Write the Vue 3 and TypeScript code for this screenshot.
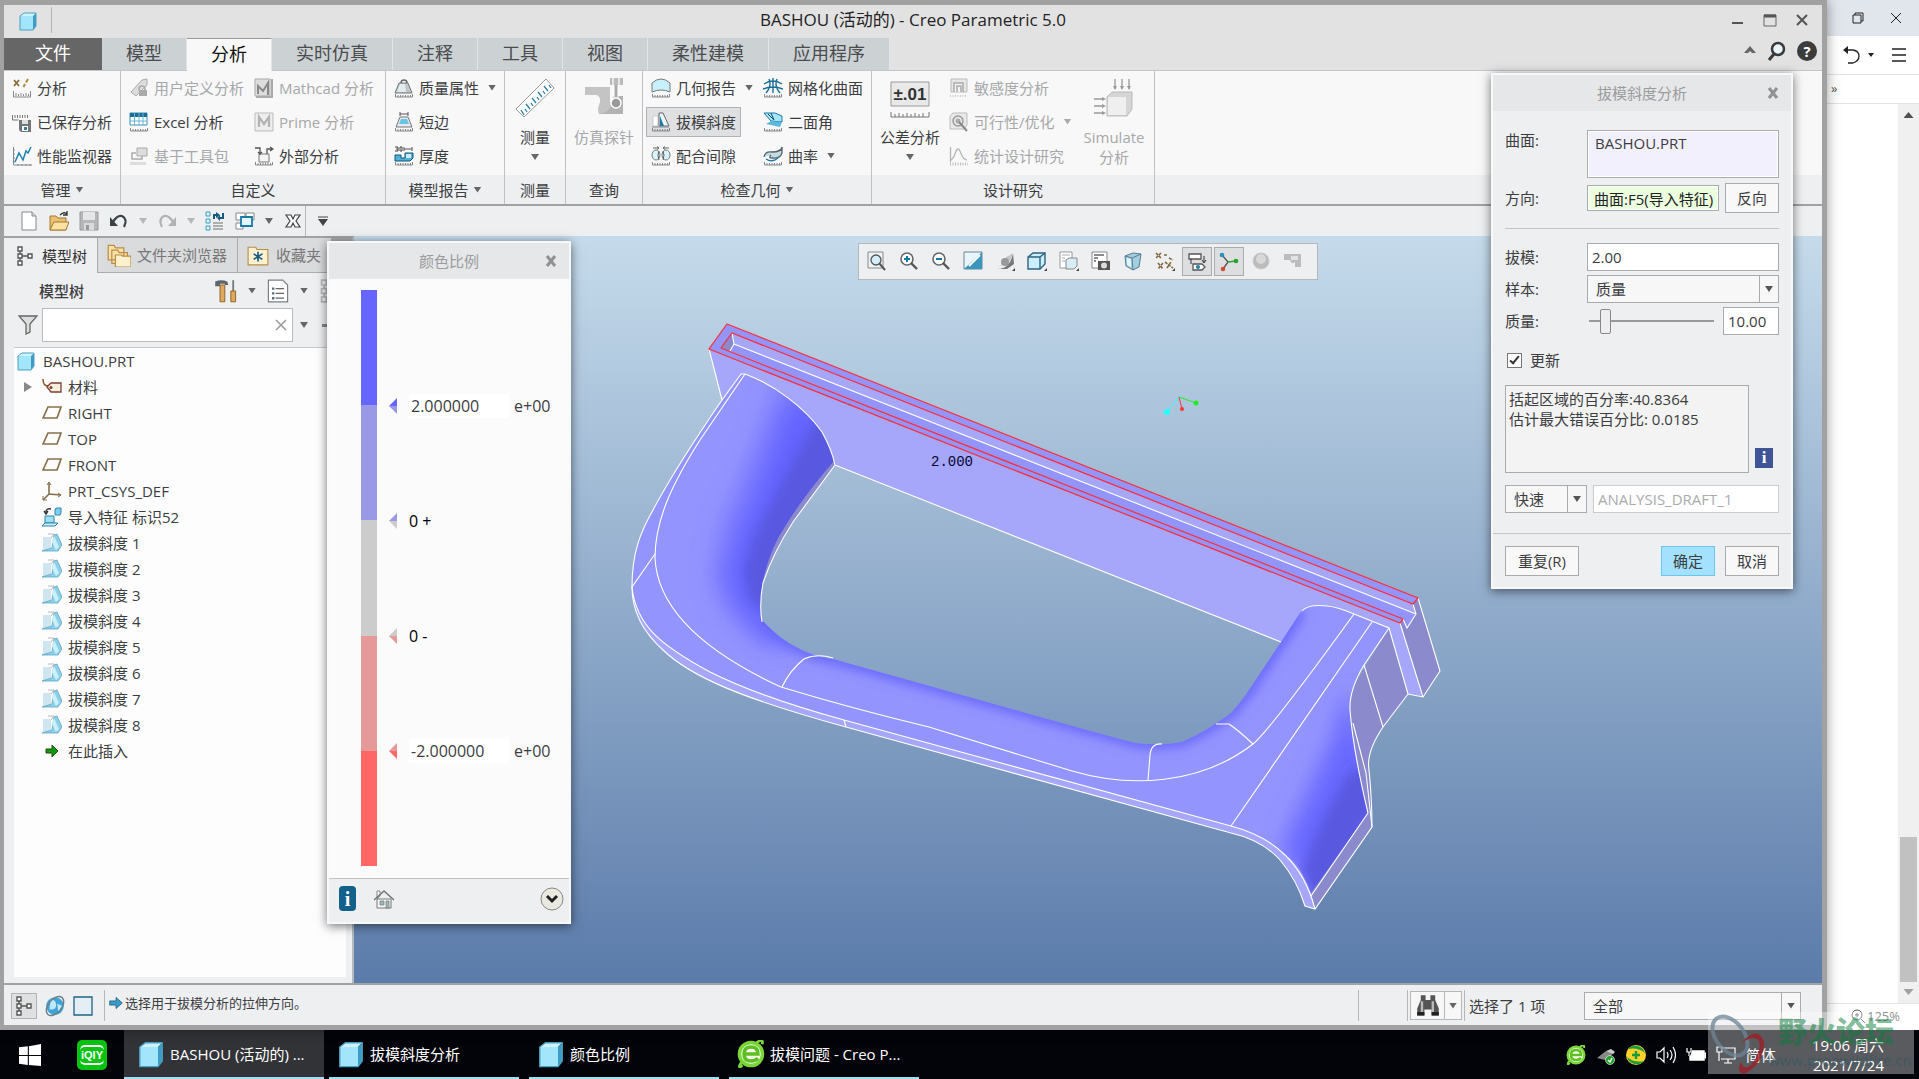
<script setup lang="ts">
import { ref } from 'vue'

const scale = '<path d="M1.5 16v3h17v-3M4 17v2M6.5 17v2M9 17v2M11.5 17v2M14 17v2M16.5 17v2" fill="none" stroke="#85888b"/>'
const wedge = '<path d="M1 4h8v13H1z" fill="#cfe6f0"/><path d="M6 1h6L9 5" fill="none" stroke="#bbb"/><path d="M12 2l3-1 5 11-4 6H0l10-3z" fill="#8fcfe8" stroke="#5aa7c4" stroke-width=".8"/><path d="M12 3l5 11-3 3-4-8z" fill="#c9f1fd"/>'
const nodes = '<path d="M5 5v10M5 10h9" stroke="#555" stroke-width="1.4"/><path d="M3 1h4v4H3zM3 8h4v4H3zM3 15h4v4H3zM13 8h4v4h-4z" fill="#fff" stroke="#555" stroke-width="1.4"/>'
const cube = '<path d="M2 5l4-3h12l-3 3z" fill="#cdf3ff"/><path d="M15 5l3-3v13l-3 4z" fill="#3c9cc4"/><path d="M2 5h13v14H2z" fill="#a3e6fb"/><path d="M2 5l4-3h12v13l-3 4H2z" fill="none" stroke="#4a9fc2"/>'
const lens = '<circle cx="8" cy="8" r="6" fill="#fff" stroke="#666" stroke-width="1.6"/><path d="M12 12l6 6" stroke="#555" stroke-width="2.4"/>'

const icons: Record<string, string> = {
  cube,
  nodes,
  wedge,
  analysis: '<path d="M2 2l5 6M7 2L2 8" stroke="#8a6a3a" stroke-width="1.8"/><path d="M16 1l-2 3.500M13 6l-1.500 3" stroke="#b08a3c" stroke-width="2"/><path d="M1.500 13v6h17v-6M4 15v3M6.500 16v2M9 15v3M11.500 16v2M14 15v3M16.500 16v2" fill="none" stroke="#85888b"/>',
  saved: '<path d="M.5 3v5h6M3 3v3M5.500 3v3M8 3v3M10.500 3v3M13 3v3M15.500 3v3" fill="none" stroke="#777"/><path d="M7 8h12v12H9l-2-2z" fill="#72767a"/><path d="M10 8h6v4h-6z" fill="#ddd"/><path d="M10 14h6v5h-6z" fill="#fff"/><path d="M12 15h3v3h-3z" fill="#2a7fa8"/>',
  monitor: '<path d="M1.500 1v18H20M1 4h2M1 8h2M1 12h2M1 16h2M6 18v2M10 18v2M14 18v2M18 18v2" fill="none" stroke="#85888b"/><path d="M3 16l4-9 4 7 3-9 2 2 3-6" fill="none" stroke="#1f7fae" stroke-width="1.5"/>',
  udf: '<path d="M2 14L13 2l5-1v6L7 18z" fill="#ddd" stroke="#aaa"/><circle cx="13" cy="11" r="3" fill="none" stroke="#aaa" stroke-width="1.500"/><path d="M10 12h8v6h-8z" fill="#aaa"/>',
  excel: '<path d="M1 1h17v12H1z" fill="#fff" stroke="#3c8db0"/><path d="M1 1h17v4H1z" fill="#1b6f97"/><path d="M1 9h17M5.500 1v12M10 1v12M14 1v12" stroke="#69b7d6"/>' + scale,
  toolkit: '<path d="M8 2h10v8H8z" fill="#ddd" stroke="#aaa"/><path d="M13 10v3H3V7h4" fill="none" stroke="#aaa" stroke-width="1.5"/><path d="M1 16h16v3H1z" fill="#ddd"/>',
  mathcad: '<path d="M1 1h15v17H1z" fill="#ddd" stroke="#aaa"/><path d="M4 16V8l5 5 5-8v12" fill="none" stroke="#888" stroke-width="2"/><path d="M18 1v18M2 19h17" stroke="#aaa" stroke-width="2"/>',
  prime: '<path d="M1 1h18v18H1z" fill="#eee" stroke="#bbb"/><path d="M5 15V5l5 7 5-7v10" fill="none" stroke="#b3b3b3" stroke-width="2.2"/>',
  external: '<path d="M5 8h10v8H5z" fill="#f4f4f4" stroke="#777"/><path d="M1 2h5v6M4 6l2 2 2-2M13 8V3h5M16 1l3 2-3 2" fill="none" stroke="#555" stroke-width="1.3"/>' + scale,
  mass: '<path d="M7 5a3 3 0 0 1 6 0" fill="none" stroke="#666" stroke-width="1.5"/><path d="M5 5h9l4 10H1z" fill="#bfc7cb" stroke="#6e777b"/><path d="M6 6h5l1 8H3z" fill="#e4eaed"/>' + scale,
  shortEdge: '<path d="M6 0v4M14 0v4M6 2h8" stroke="#555"/><path d="M6 5h8l4 10H2z" fill="#e5eaed" stroke="#777"/><path d="M7 7h6l2 5H5z" fill="#69c4e6"/>' + scale,
  thickness: '<path d="M10 1v4M18 1v4M10 3h8" stroke="#555"/><path d="M1 1h3v2H2M4 3v2H1M6 1h2v4H6z" fill="none" stroke="#444"/><path d="M1 9h6v3h4V7h8v5l-3 3H1z" fill="#50b0d6" stroke="#12577a"/><path d="M12 8h5v4h-5z" fill="#c8effc"/>' + scale,
  geomReport: '<path d="M1 5Q10-3 19 5v9Q10 10 1 14z" fill="#c9f1fb" stroke="#777"/>' + scale,
  draftTool: '<path d="M2 4h5v10H2z" fill="#fff" stroke="#ccc"/><path d="M8 1h4l6 13H8z" fill="#e8f6fb" stroke="#666"/><path d="M9 4l4 10H9z" fill="#1d7ba5"/><path d="M1 15h17" stroke="#888"/>' + scale,
  clearance: '<path d="M2 2h6M18 2h-6M6 .5L8 2 6 3.500M14 .5L12 2l2 1.500" stroke="#666" fill="none"/><ellipse cx="5" cy="9" rx="4" ry="5" fill="#d7f3fb" stroke="#777"/><ellipse cx="15" cy="9" rx="4" ry="5" fill="#d7f3fb" stroke="#777"/><path d="M8 5q-2 4 0 9M12 5q2 4 0 9" fill="none" stroke="#555"/>' + scale,
  mesh: '<path d="M1 6q9-6 18 0M0 11q10-4 20 0M6 1q3 7-3 14M14 1q-3 7 3 14M10 0v15" fill="none" stroke="#1b6f97" stroke-width="1.4"/>' + scale,
  dihedral: '<path d="M1 1l7 8 11 1V4L12 1z" fill="#a8e4f7" stroke="#1b7ba6"/><path d="M8 9l-5 3 14 3 2-5z" fill="#5db9dc"/><path d="M5 2l6 6M8 1l3 7" stroke="#134e6b"/>' + scale,
  curvature: '<path d="M1 11q1-6 8-5 9 0 10-5v6q-2 6-10 5-4 0-1-3" fill="#c5dbe2" stroke="#55656c" stroke-width="1.3"/><path d="M3 13q6 4 12-1" stroke="#1d7ba5" fill="none" stroke-width="1.5"/>' + scale,
  sensitivity: '<path d="M2 1h16v13H2z" fill="#e7e7e7" stroke="#bbb"/><path d="M5 14V5h9v9M8 14V8h4v6" stroke="#aaa" fill="#f4f4f4" stroke-width="1.5"/><path d="M1 18h17" stroke="#ccc" stroke-width="2" stroke-dasharray="1 1.5"/>',
  feasibility: '<path d="M1 4l3-3h14v12l-3 4H1z" fill="#e9e9e9" stroke="#bbb"/><circle cx="9" cy="9" r="5" fill="none" stroke="#999" stroke-width="1.5"/><circle cx="9" cy="9" r="2.500" fill="#aaa"/><path d="M10 10l8 9" stroke="#888" stroke-width="2"/>',
  statistics: '<path d="M1.500 1v15M1 14c5 0 5-11 8-11s3 11 9 11" fill="none" stroke="#b5b5b5" stroke-width="1.3"/><path d="M1 18h18" stroke="#bbb" stroke-width="3" stroke-dasharray="1 1.5"/>',
  newFile: '<path d="M3 1h10l4 4v14H3z" fill="#fff" stroke="#888"/><path d="M13 1v4h4" fill="#ddd" stroke="#888"/>',
  open: '<path d="M1 5h6l2 2h8v12H1z" fill="#e8bf73" stroke="#a67a2c"/><path d="M1 19l4-8h15l-3 8z" fill="#fbe1a2" stroke="#a67a2c"/><path d="M11 4q4-4 7-1M18 0v4h-4" fill="none" stroke="#333" stroke-width="1.3"/>',
  save: '<path d="M1 1h18v18H1z" fill="#b5b8ba" stroke="#999"/><path d="M4 1h12v8H4z" fill="#e6e6e6"/><path d="M5 12h10v7H5z" fill="#dadada"/><path d="M7 14h3v5H7z" fill="#999"/>',
  undo: '<path d="M4 11Q8 4 13 5q6 3 2 11" fill="none" stroke="#3c4347" stroke-width="2.200"/><path d="M1 6v9h8z" fill="#3c4347"/>',
  redo: '<path d="M16 11Q12 4 7 5q-6 3-2 11" fill="none" stroke="#b0b3b5" stroke-width="2.200"/><path d="M19 6v9h-8z" fill="#b0b3b5"/>',
  regen: '<path d="M1 1h4v4H1zM1 8h4v4H1zM1 15h4v4H1z" fill="#e0f5fd" stroke="#3b9bc0"/><path d="M8 12h10M8 15h10M8 18h10" stroke="#999" stroke-width="1.300"/><path d="M9 8V4h3M18 2v5h-3" fill="none" stroke="#155a7e" stroke-width="2"/><path d="M11 1l4 3-4 3zM15 4l-3 3 3 3z" fill="#155a7e"/>',
  windows: '<path d="M1 2h9v7H1zM1 12h7v6H1zM11 2h8v7h-8z" fill="#fff" stroke="#888"/><path d="M6 6h11v9H6z" fill="#e4f7fe" stroke="#1b7ba6" stroke-width="1.800"/>',
  closeX: '<path d="M3 4h5l2 4 2-4h5l-4 6 4 6h-5l-2-4-2 4H3l4-6z" fill="#fff" stroke="#444" stroke-width="1.200"/>',
  folders: '<path d="M1 2h5l1 2h7v10H1zM4 6h5l1 2h7v9H4z" fill="#fae0a9" stroke="#b98d45"/><path d="M7 10h5l1 1h7v9H7z" fill="#fff0cd" stroke="#b98d45"/>',
  favorite: '<path d="M1 3h7l1 2h10v14H1z" fill="#fff0cf" stroke="#b98d45"/><path d="M10 7v9M6 9l8 5M14 9l-8 5" stroke="#155a7e" stroke-width="1.500"/>',
  tools: '<path d="M1 2q5-2 10 0l1 3H9V4H5v2H1z" fill="#5e656b"/><path d="M5 5h4v14H5z" fill="#dfa95b" stroke="#8e6328" stroke-width=".8"/><path d="M16 1v9" stroke="#777" stroke-width="1.500"/><path d="M14 10h4v9h-4z" fill="#dfa95b" stroke="#8e6328" stroke-width=".8"/>',
  list: '<path d="M2 1h12l4 4v14H2z" fill="#fff" stroke="#7a8085"/><path d="M8 8h7M8 12h7M8 16h7" stroke="#666"/><path d="M5 7h2v2H5zM5 11h2v2H5zM5 15h2v2H5z" fill="#5b6f7a"/>',
  funnel: '<path d="M1 1h18l-7 8v8l-4 2V9z" fill="#ddd" stroke="#666" stroke-width="1.300"/>',
  tag: '<path d="M1 2q0 7 5 7" fill="none" stroke="#8a5a22" stroke-width="1.500"/><path d="M5 10l4-4h10v9H9z" fill="#f7f0df" stroke="#7c3f30" stroke-width="1.300"/><circle cx="9" cy="10.500" r="1.500" fill="#7c3f30"/>',
  plane: '<path d="M6 4h13l-4 11H1z" fill="none" stroke="#86704a" stroke-width="1.700"/>',
  csys: '<path d="M7 2v11l12 1M7 13l-6 6" fill="none" stroke="#86704a" stroke-width="1.600"/><path d="M5 4l2-3 2 3M16 12l3 2-3 2M1 15v4h4" fill="none" stroke="#86704a"/>',
  importFeat: '<path d="M4 5q0-4 5-3M2 4l2 3 2-3" fill="none" stroke="#333" stroke-width="1.400"/><path d="M13 2l2-1h4v5l-1 2h-5z" fill="#7fd0ee" stroke="#2a84aa"/><path d="M3 9h9v7H3z" fill="#9fe0f6" stroke="#2a84aa"/><path d="M0 19l3-3h13l-3 3z" fill="#cdeffb" stroke="#2a84aa"/>',
  insert: '<path d="M4 8h6V4l6 6-6 6v-4H4z" fill="#0a9a12" stroke="#2d4b0a"/>',
  zoomFit: '<path d="M1 1h15v16H1z" fill="#eef5f8" stroke="#888"/><circle cx="9" cy="9" r="5" fill="#d5eef7" stroke="#555" stroke-width="1.300"/><path d="M12 12l6 7" stroke="#555" stroke-width="2"/>',
  zoomIn: lens + '<path d="M5 8h6M8 5v6" stroke="#1678a5" stroke-width="2"/>',
  zoomOut: lens + '<path d="M5 8h6" stroke="#1678a5" stroke-width="2"/>',
  repaint: '<path d="M1 1h18v17H1z" fill="#e8f6fb" stroke="#6a8591"/><path d="M1 18L19 1v17z" fill="#3c96bd"/><path d="M6 15L17 4" stroke="#fff" stroke-width="2"/>',
  render: '<path d="M1 18q14 1 17-16l1 11-7 5z" fill="#777"/><path d="M2 15q8 0 9-9 4-1 6-4 0 13-15 13z" fill="#c4c4c4"/><circle cx="10" cy="11" r="4" fill="#999"/><path d="M20 17v3h-3z" fill="#444"/>',
  display: '<path d="M1 6l5-4h12v11l-5 5H1z" fill="#cdeefb" stroke="#2b6480" stroke-width="1.400"/><path d="M1 6h12v12M13 6l5-4" fill="none" stroke="#2b6480" stroke-width="1.400"/><path d="M20 17v3h-3z" fill="#444"/>',
  orient: '<path d="M1 1h12v16H1z" fill="#fff" stroke="#999"/><path d="M7 9l3-2h8v8l-3 3H7z" fill="#d8edf5" stroke="#888"/><path d="M3 4h8M3 7h3M3 10h3" stroke="#aaa"/><path d="M20 17v3h-3z" fill="#444"/>',
  camera: '<path d="M1 1h15v16H1z" fill="#fff" stroke="#888"/><path d="M3 4h10M3 7h4M3 10h2" stroke="#666" stroke-width="1.500"/><path d="M7 10h12v9H7z" fill="#555"/><circle cx="13" cy="14.500" r="3" fill="#ddd"/>',
  perspective: '<path d="M2 5l8-3 8 1-2 13-6 3-7-4z" fill="#a5ccdf" stroke="#557f93"/><path d="M2 5l7 2 9-4M9 7l1 12" fill="none" stroke="#557f93"/><path d="M4 7l4 1v8l-4-2z" fill="#dff4fb"/>',
  datums: '<path d="M1 2l5 5M6 2L1 7M9 4h4M14 7l4 2M3 12l5 6M8 12l-5 6M10 11l8 6M12 17l4-6" stroke="#85693a" stroke-width="1.600" stroke-dasharray="3 1"/><path d="M20 17v3h-3z" fill="#444"/>',
  annotation: '<path d="M2 2h12v5H2zM6 12h9l3 3-3 3H6z" fill="#fff" stroke="#555" stroke-width="1.300"/><path d="M4 7v5M17 4v6M15 8l2 3 2-3" fill="none" stroke="#333"/><circle cx="11" cy="15" r="2" fill="#2680a8"/>',
  spin: '<path d="M3 3l6 7M9 10l-5 7" stroke="#555" stroke-width="1.300"/><path d="M9 10l8-1" stroke="#28a52d" stroke-width="1.600"/><circle cx="3" cy="3" r="2.300" fill="#2a8fba"/><circle cx="17" cy="9" r="2.300" fill="#28a52d"/><circle cx="4" cy="17" r="2.300" fill="#d34b33"/>',
  stop: '<circle cx="10" cy="10" r="8" fill="#bbb" stroke="#ccc"/><circle cx="10" cy="8" r="5" fill="#d8d8d8"/>',
  simulate: '<path d="M1 3h17v13h-6v-5q-4 3-5-2H1z" fill="#bcbcbc"/><path d="M8 5h7v4H8z" fill="#e2e2e2"/>',
  globe: '<circle cx="10" cy="10" r="8" fill="#3fa4d8"/><path d="M6 4q5 0 5 5t-6 4zM12 8l5 2-4 6z" fill="#bfe8fa"/><ellipse cx="10" cy="10" rx="10" ry="6" transform="rotate(-50 10 10)" fill="none" stroke="#6b7f8a" stroke-width="1.300"/>',
  page: '<path d="M1 1h18v18H1z" fill="#e3eff5" stroke="#1e6484" stroke-width="1.300"/>',
  prompt: '<path d="M1 7h9V2l9 8-9 8v-5H1z" fill="#3a9ccb" stroke="#14506e"/>',
  binoculars: '<path d="M4 1h4v4h4V1h4v4l3 7v6h-6v-5H7v5H1v-6l3-7z" fill="#555"/><path d="M5 6v9M14 6v9" stroke="#bbb" stroke-width="2"/><path d="M1 15h6v3H1zM13 15h6v3h-6z" fill="#222"/>',
  home: '<path d="M3 2h3v5l-3 3z" fill="#fff" stroke="#888"/><path d="M3 10h14v9H3z" fill="#f6f6f6" stroke="#777"/><path d="M0 11l10-9 10 9" fill="none" stroke="#777" stroke-width="1.600"/><path d="M6 12h4v4H6zM12 12h3v7h-3z" fill="#9bb" stroke="#777" stroke-width=".7"/>',
  ruler: '<path d="M1 31L31 1l8 9L9 39z" fill="#fff" stroke="#999"/><path d="M9 37l-3-5M12 34l-2-3M15 31l-4-5M18 28l-2-3M21 25l-4-5M24 22l-2-3M27 19l-4-5M30 16l-2-3M33 13l-4-5M36 10l-2-3" stroke="#2a7fa8" stroke-width="1.300"/>',
  probe: '<path d="M1 9h25v15h13v12H15q-2-5 0-9 3-7-2-10H1z" fill="#c4c4c4"/><path d="M15 36q14-2 14-18h10v18z" fill="#b2b2b2"/><path d="M26 0h13v7H26z" fill="#bbb"/><path d="M29 0v7M35 0v7" stroke="#e6e6e6" stroke-width="2"/><path d="M32 7v15" stroke="#fff" stroke-width="5"/><path d="M32 7v15" stroke="#aaa" stroke-width="3"/><circle cx="32" cy="25" r="5" fill="#999" stroke="#fff" stroke-width="1.500"/>',
  cubeLoads: '<path d="M13 19l5-5h20v17l-5 7H13z" fill="#d5d5d5" stroke="#bbb"/><path d="M14 19h18v18H14z" fill="#efefef"/><path d="M21 1v10M28 1v10M35 1v10M0 21h10M0 28h10M0 35h10" stroke="#999" stroke-width="1.300"/><path d="M19 8l2 4 2-4zM26 8l2 4 2-4zM33 8l2 4 2-4zM8 19l4 2-4 2zM8 26l4 2-4 2zM8 33l4 2-4 2z" fill="#999"/>',
  start: '<path d="M0 3l8-1v8H0zM9 2l11-2v10H9zM0 11h8v8l-8-1zM9 11h11v9L9 19z" fill="#fff"/>',
  browser: '<circle cx="10" cy="10" r="8" fill="none" stroke="#7bd63a" stroke-width="3"/><circle cx="10" cy="10" r="7" fill="#f4ffe9"/><path d="M5 10h10q0-5-5-5t-5 5 5 5q3 0 5-2" fill="none" stroke="#5fbe22" stroke-width="2.500"/><path d="M3 16Q0 21 4 18M14 2q5-4 4 1" stroke="#7bd63a" stroke-width="2" fill="none"/>',
  usb: '<path d="M1 13l9-7 8 2-9 7z" fill="#888"/><path d="M10 6l5-2 4 3-2 2z" fill="#ccc"/><circle cx="14" cy="15" r="4.500" fill="#27a22d" stroke="#fff" stroke-width=".6"/><path d="M12 15l2 2 2-4" fill="none" stroke="#fff" stroke-width="1.300"/>',
  shield: '<circle cx="10" cy="10" r="10" fill="#ffd12b"/><path d="M2 4a10 10 0 0 1 17 4q-7-6-17-4zM18 16A10 10 0 0 1 1 12q7 6 17 4z" fill="#1a9b3c"/><path d="M10 6v8M6 10h8" stroke="#1a9b3c" stroke-width="2.500"/>',
  speaker: '<path d="M1 7h3l4-4v14l-4-4H1zM11 7q2 3 0 6M14 5q4 5 0 10M17 2q5 8 0 16" fill="none" stroke="#fff" stroke-width="1.200"/>',
  battery: '<path d="M6 6h12v9H4v-4" fill="#fff" stroke="#fff" stroke-width="1.500"/><path d="M19 8h1v5h-1zM1 3v4h4V3M3 7v4M1 7h4" fill="none" stroke="#fff" stroke-width="1.200"/>',
  network: '<path d="M5 3h14v11H5M12 14v4M8 18h8M1 2h5v5H1zM3 7v9" fill="none" stroke="#fff" stroke-width="1.200"/>',
}

interface Cmd { icon: string; label: string; off?: boolean; menu?: boolean; on?: boolean }
interface Group { key: string; title: string; menu?: boolean; big?: Cmd; cols: Cmd[][]; bigEnd?: Cmd }

const tabs = ['文件', '模型', '分析', '实时仿真', '注释', '工具', '视图', '柔性建模', '应用程序']
const groups: Group[] = [
  { key: 'manage', title: '管理', menu: true, cols: [[
    { icon: 'analysis', label: '分析' }, { icon: 'saved', label: '已保存分析' }, { icon: 'monitor', label: '性能监视器' }]] },
  { key: 'custom', title: '自定义', cols: [
    [{ icon: 'udf', label: '用户定义分析', off: true }, { icon: 'excel', label: 'Excel 分析' }, { icon: 'toolkit', label: '基于工具包', off: true }],
    [{ icon: 'mathcad', label: 'Mathcad 分析', off: true }, { icon: 'prime', label: 'Prime 分析', off: true }, { icon: 'external', label: '外部分析' }]] },
  { key: 'report', title: '模型报告', menu: true, cols: [[
    { icon: 'mass', label: '质量属性', menu: true }, { icon: 'shortEdge', label: '短边' }, { icon: 'thickness', label: '厚度' }]] },
  { key: 'measure', title: '测量', big: { icon: 'ruler', label: '测量', menu: true }, cols: [] },
  { key: 'query', title: '查询', big: { icon: 'probe', label: '仿真探针', off: true }, cols: [] },
  { key: 'inspect', title: '检查几何', menu: true, cols: [
    [{ icon: 'geomReport', label: '几何报告', menu: true }, { icon: 'draftTool', label: '拔模斜度', on: true }, { icon: 'clearance', label: '配合间隙' }],
    [{ icon: 'mesh', label: '网格化曲面' }, { icon: 'dihedral', label: '二面角' }, { icon: 'curvature', label: '曲率', menu: true }]] },
  { key: 'design', title: '设计研究', big: { icon: 'tolerance', label: '公差分析', menu: true }, cols: [[
    { icon: 'sensitivity', label: '敏感度分析', off: true }, { icon: 'feasibility', label: '可行性/优化', off: true, menu: true }, { icon: 'statistics', label: '统计设计研究', off: true }]],
    bigEnd: { icon: 'cubeLoads', label: 'Simulate 分析', off: true } },
]

const quick = ['newFile', 'open', 'save', 'undo', '-off', 'redo', '-off', 'regen', 'windows', '-', 'closeX']
const viewTools = ['zoomFit', 'zoomIn', 'zoomOut', 'repaint', 'render', 'display', 'orient', 'camera', 'perspective', 'datums', 'annotation', 'spin', 'stop', 'simulate']
const tree = [
  { icon: 'tag', label: '材料', open: true },
  { icon: 'plane', label: 'RIGHT' }, { icon: 'plane', label: 'TOP' }, { icon: 'plane', label: 'FRONT' },
  { icon: 'csys', label: 'PRT_CSYS_DEF' }, { icon: 'importFeat', label: '导入特征 标识52' },
  ...[1, 2, 3, 4, 5, 6, 7, 8].map(n => ({ icon: 'wedge', label: `拔模斜度 ${n}` })),
  { icon: 'insert', label: '在此插入' },
]
const bands = ['#6666ff', '#9999e5', '#cccccc', '#e59999', '#ff6666']
const marks = ref([
  { label: '2.000000', edit: true }, { label: '0 +', edit: false },
  { label: '0 -', edit: false }, { label: '-2.000000', edit: true },
])
const tasks = [
  { icon: 'cube', label: 'BASHOU (活动的) ...' }, { icon: 'cube', label: '拔模斜度分析' },
  { icon: 'cube', label: '颜色比例' }, { icon: 'browser', label: '拔模问题 - Creo P...' },
]
const tray = ['browser', 'usb', 'shield', 'speaker', 'battery', 'network']

const filter = ref('')
const draft = ref('2.00')
const sample = ref('质量')
const quality = ref(10)
const qualityText = ref('10.00')
const update = ref(true)
const mode = ref('快速')
const scope = ref('全部')
const result = ref('括起区域的百分率:40.8364\n估计最大错误百分比: 0.0185')
</script>

<template>
  <div class="desktop">
    <div class="windows">
      <main class="creo">
        <header class="title-bar">
          <span class="app-icon"><svg class="i20" viewBox="0 0 20 20" v-html="icons.cube" /></span>
          <h1>BASHOU (活动的) - Creo Parametric 5.0</h1>
          <div class="win-controls">
            <button aria-label="最小化"><svg class="i14" viewBox="0 0 14 14"><path d="M1 10h11" stroke="#555" stroke-width="2" /></svg></button>
            <button aria-label="最大化"><svg class="i14" viewBox="0 0 14 14"><path d="M1 2h12v11H1z" fill="none" stroke="#666" /><path d="M1 3h12" stroke="#555" stroke-width="3" /></svg></button>
            <button aria-label="关闭"><svg class="i14" viewBox="0 0 14 14"><path d="M2 2l10 10M12 2L2 12" stroke="#555" stroke-width="2" /></svg></button>
          </div>
        </header>
        <nav class="tabs">
          <button v-for="(t, i) in tabs" :key="t" :class="{ file: i === 0, active: i === 2 }">{{ t }}</button>
          <div class="helpers">
            <button aria-label="折叠"><svg class="i14" viewBox="0 0 14 14"><path d="M1 9l6-7 6 7H9L7 7 5 9z" fill="#666" /></svg></button>
            <button aria-label="搜索"><svg class="i20" viewBox="0 0 20 20"><circle cx="11" cy="8" r="6" fill="#e9f3f8" stroke="#3a3a3a" stroke-width="2.500" /><path d="M7 13l-5 6" stroke="#3a3a3a" stroke-width="3" /></svg></button>
            <button class="help" aria-label="帮助">?</button>
          </div>
        </nav>

        <section class="ribbon">
          <div v-for="g in groups" :key="g.key" class="group" :class="g.key">
            <div class="group-body">
              <button v-if="g.big" class="big" :class="{ off: g.big.off }">
                <svg v-if="g.big.icon === 'tolerance'" class="i40" viewBox="0 0 40 40">
                  <path d="M1 4h38v24H1z" fill="#e9e9e9" stroke="#999" />
                  <text x="20" y="22" text-anchor="middle" font-family="Liberation Sans" font-weight="700" font-size="17" fill="#333">±.01</text>
                  <path d="M1 34v5h38v-5M5 36v3M9 35v4M13 36v3M17 35v4M21 36v3M25 35v4M29 36v3M33 35v4" fill="none" stroke="#777" />
                </svg>
                <svg v-else class="i40" viewBox="0 0 40 40" v-html="icons[g.big.icon]" />
                <span>{{ g.big.label }}</span>
                <i v-if="g.big.menu" class="caret" />
              </button>
              <div v-for="(c, ci) in g.cols" :key="ci" class="col">
                <button v-for="b in c" :key="b.label" class="cmd" :class="{ off: b.off, on: b.on }">
                  <svg class="i20" viewBox="0 0 20 20" v-html="icons[b.icon]" />
                  <span>{{ b.label }}</span>
                  <i v-if="b.menu" class="caret" />
                </button>
              </div>
              <button v-if="g.bigEnd" class="big off end">
                <svg class="i40" viewBox="0 0 40 40" v-html="icons[g.bigEnd.icon]" />
                <span>{{ g.bigEnd.label }}</span>
              </button>
            </div>
            <div class="group-title">{{ g.title }}<i v-if="g.menu" class="caret" /></div>
          </div>
          <div class="group rest"><div class="group-body" /><div class="group-title" /></div>
        </section>

        <div class="quick">
          <template v-for="(q, i) in quick" :key="i">
            <i v-if="q.startsWith('-')" class="caret" :class="{ faded: q === '-off' }" />
            <button v-else :aria-label="q"><svg class="i20" viewBox="0 0 20 20" v-html="icons[q]" /></button>
          </template>
          <span class="rule" />
          <button aria-label="自定义快速访问"><svg class="i14" viewBox="0 0 14 14"><path d="M2 3h10" stroke="#444" /><path d="M2 5h10l-5 7z" fill="#444" /></svg></button>
        </div>

        <div class="work">
          <aside class="panel">
            <div class="panel-tabs">
              <button class="active"><svg class="i20" viewBox="0 0 20 20" v-html="icons.nodes" />模型树</button>
              <button class="wide"><svg class="i24" viewBox="0 0 20 20" v-html="icons.folders" />文件夹浏览器</button>
              <button><svg class="i22" viewBox="0 0 20 20" v-html="icons.favorite" />收藏夹</button>
            </div>
            <div class="panel-head">
              <h2>模型树</h2>
              <button aria-label="设置"><svg class="i24" viewBox="0 0 20 20" v-html="icons.tools" /></button><i class="caret" />
              <button aria-label="显示"><svg class="i24" viewBox="0 0 20 20" v-html="icons.list" /></button><i class="caret" />
              <svg class="i24 ghost" viewBox="0 0 20 20" v-html="icons.nodes" />
            </div>
            <div class="filter">
              <svg class="i20" viewBox="0 0 20 20" v-html="icons.funnel" />
              <label class="filter-box"><input v-model="filter" aria-label="过滤"><svg class="i14" viewBox="0 0 14 14"><path d="M2 2l10 10M12 2L2 12" stroke="#999" stroke-width="1.500" /></svg></label>
              <i class="caret" />
              <span class="dash" />
            </div>
            <ul class="tree">
              <li class="root"><svg class="i20" viewBox="0 0 20 20" v-html="icons.cube" />BASHOU.PRT</li>
              <li v-for="n in tree" :key="n.label">
                <i class="twist" :class="{ shown: 'open' in n }" />
                <svg class="i20" viewBox="0 0 20 20" v-html="icons[n.icon]" />{{ n.label }}
              </li>
            </ul>
          </aside>

          <section class="viewport">
            <svg class="model" viewBox="354 236 1468 747" preserveAspectRatio="xMidYMid meet">
              <defs>
                <clipPath id="skin">
                  <path clip-rule="evenodd" d="M745 374C775 385 805 408 822 432Q832 450 835 465L793 522Q773 553 763 583Q759 604 762 620C775 635 800 655 833 659L1094 732L1135 743Q1160 746 1182 742Q1209 730 1231 713Q1241 702 1247 693L1281 642L1300 613Q1306 606 1312 606Q1335 604 1354 614L1389 628L1364 665Q1349 690 1350 710Q1353 750 1368 813L1312 896Q1300 862 1285 855Q1265 835 1231 826L844 720C770 700 690 670 655 640C630 610 624 560 650 515Q690 445 745 374z" />
                </clipPath>
                <filter id="soft" x="-30%" y="-30%" width="160%" height="160%"><feGaussianBlur stdDeviation="11" /></filter>
                <filter id="softer" x="-30%" y="-30%" width="160%" height="160%"><feGaussianBlur stdDeviation="6" /></filter>
              </defs>
              <path d="M709 349L1400 623L1389 629L1281 642L835 465L735 400L722 400z" fill="#a6a6fb" />
              <path d="M1418 598L1440 671L1423 697L1400 623z" fill="#8a8acc" />
              <path d="M1389 628L1400 623L1423 697L1408 694z" fill="#a6a6fb" />
              <path d="M709 349L727 324L1418 598L1413 604L732 333L721 348L1403 619L1400 623z" fill="#9494ff" />
              <path d="M732 333L1413 604L1416 614L734 344z" fill="#a6a6fb" />
              <path d="M734 344L1416 614L1407 628L1403 619L730 351z" fill="#9494ff" />
              <path d="M732 333l2 11l-4 7l-9-3z" fill="#8a8acc" />
              <path d="M1389 628L1408 694L1383 727Q1366 752 1369 770Q1372 800 1372 827L1366 820L1345 700z" fill="#8a8acc" />
              <path d="M741 374H745C775 385 805 408 822 432Q832 450 835 465L793 522Q773 553 763 583Q759 604 762 620C775 635 800 655 833 659L1094 732L1135 743Q1160 746 1182 742Q1209 730 1231 713Q1241 702 1247 693L1281 642L1300 613Q1306 606 1312 606Q1335 604 1354 614L1389 628L1364 665Q1349 690 1350 710Q1353 750 1368 813L1372 827L1315 909L1305 906Q1297 880 1280 860Q1262 840 1231 833L846 727C740 698 690 676 663 650C643 632 632 610 632 587C632 553 640 533 653 510C670 478 700 432 722 400z" fill="#9494ff" />
              <g clip-path="url(#skin)">
                <path d="M780 378L850 460L770 583L770 625L800 650L760 645L725 610L712 575L722 525L745 470L765 420z" fill="#7a7aff" filter="url(#soft)" />
                <path d="M800 385L850 460L770 583L766 620L795 645L765 636L740 608L727 575L740 530L763 475L783 420z" fill="#6464ff" filter="url(#soft)" />
                <path d="M818 412L850 460L800 525L772 583L770 620L750 600L744 570L756 532L780 485L805 440z" fill="#5858e0" filter="url(#softer)" />
                <path d="M762 617C775 632 800 652 833 657L1094 729L1135 740Q1160 744 1182 739Q1209 727 1231 710L1247 690L1300 610" fill="none" stroke="#6464ff" stroke-width="13" filter="url(#softer)" />
                <path d="M1346 690L1385 790L1320 910L1282 848L1308 792L1334 735z" fill="#6868ff" filter="url(#soft)" />
                <path d="M1361 765L1378 805L1318 905L1302 870L1325 815L1348 775z" fill="#5959e0" filter="url(#softer)" />
              </g>
              <path d="M834 461L836 465L793 522Q773 553 763 583L761 600Q762 570 778 538Q800 500 834 461z" fill="#8a8acc" />
              <path d="M1368 813L1372 827L1315 909L1311 893z" fill="#8a8acc" />
              <path d="M632 587C636 625 660 645 710 672Q760 697 844 720L1231 826Q1265 835 1285 855Q1306 875 1315 909L1305 906Q1297 880 1280 860Q1262 840 1231 833L846 727C740 698 690 676 663 650C643 632 632 610 632 587z" fill="#a6a6fb" />
              <g fill="none" stroke="#fff" stroke-width="1.100">
                <path d="M709 349L722 400M741 374L722 400C700 432 670 478 653 510C640 533 632 553 632 587C632 610 643 632 663 650C690 676 740 698 846 727L1231 833Q1262 840 1280 860Q1297 880 1305 906L1315 909L1372 827Q1372 800 1369 770Q1366 752 1383 727L1408 694L1423 697L1440 671L1418 598" />
                <path d="M741 374H745C775 385 805 408 822 432Q832 450 835 465L793 522Q773 553 763 583Q759 604 762 622M835 465L1281 642" />
                <path d="M745 374L700 440C672 484 655 520 655 558C657 600 690 645 781 687Q850 708 929 727L1072 771C1130 788 1200 785 1253 744Q1270 730 1354 614" />
                <path d="M655 554L632 587C636 625 660 645 710 672Q760 697 844 720L1231 826Q1265 835 1285 855Q1306 875 1315 909M844 720L846 727M1231 826L1372 622" />
                <path d="M782 687Q790 670 804 659Q817 653 833 658M1148 781L1150 755Q1151 743 1162 744M1253 744Q1238 730 1229 724L1216 724" />
                <path d="M1302 611Q1308 604 1327 606Q1338 607 1354 614L1389 628L1408 694M1389 628L1364 665Q1349 690 1350 710Q1353 750 1368 813L1311 896M1364 665L1383 727M1353 723L1366 773L1372 827M1400 623L1423 697M1403 619L1407 628L1416 614L1413 604M734 344L1416 614M732 333L734 344L730 351" />
              </g>
              <g fill="none" stroke="#ff2c36" stroke-width="1.200">
                <path d="M727 324L1418 598L1413 604L732 333L721 348L1403 619L1400 623L709 349z" />
              </g>
              <path d="M1179 397l-12 15" stroke="#2ff" /><path d="M1179 397l3 12" stroke="#f33" /><path d="M1179 397l17 6" stroke="#2e2" />
              <circle cx="1167" cy="412" r="3" fill="#2ff" /><circle cx="1182" cy="409" r="2" fill="#f33" /><circle cx="1196" cy="403" r="2.500" fill="#2e2" />
              <text x="931" y="466" font-family="Liberation Mono" font-size="14" fill="#050530">2.000</text>
            </svg>
            <div class="view-tools">
              <button v-for="v in viewTools" :key="v" :aria-label="v" :class="{ on: v === 'annotation' || v === 'spin' }"><svg class="i20" viewBox="0 0 20 20" v-html="icons[v]" /></button>
            </div>
          </section>
        </div>

        <footer class="status">
          <button class="framed" aria-label="导航器"><svg class="i20" viewBox="0 0 20 20" v-html="icons.nodes" /></button>
          <button aria-label="浏览器"><svg class="i22" viewBox="0 0 20 20" v-html="icons.globe" /></button>
          <button aria-label="全屏"><svg class="i20" viewBox="0 0 20 20" v-html="icons.page" /></button>
          <span class="rule" />
          <p><svg class="i14" viewBox="0 0 20 20" v-html="icons.prompt" />选择用于拔模分析的拉伸方向。</p>
          <span class="rule far" />
          <span class="rule" />
          <div class="find"><button aria-label="查找"><svg class="i24" viewBox="0 0 20 20" v-html="icons.binoculars" /></button><button class="drop" aria-label="查找选项"><i class="caret" /></button></div>
          <span class="rule" />
          <output>选择了 1 项</output>
          <span class="pick scope"><select v-model="scope" aria-label="选择过滤器"><option>全部</option></select></span>
        </footer>

        <section class="dialog colors" aria-label="颜色比例">
          <header>颜色比例<button aria-label="关闭颜色比例"><svg class="i14" viewBox="0 0 14 14"><path d="M3 2l8 10M11 2L3 12" stroke="#8f9193" stroke-width="3" /></svg></button></header>
          <div class="legend">
            <div class="bar"><span v-for="b in bands" :key="b" :style="{ background: b }" /></div>
            <ol>
              <li v-for="(m, i) in marks" :key="i">
                <svg width="8" height="16" viewBox="0 0 8 16"><path d="M8 0v8H0z" :fill="bands[i]" /><path d="M8 16V8H0z" :fill="bands[i + 1]" /></svg>
                <template v-if="m.edit"><input v-model="m.label" :aria-label="`界限 ${i + 1}`"><span>e+00</span></template>
                <b v-else>{{ m.label }}</b>
              </li>
            </ol>
          </div>
          <footer>
            <button class="info" aria-label="信息">i</button>
            <button aria-label="缺省"><svg class="i20" viewBox="0 0 20 20" v-html="icons.home" /></button>
            <button class="more" aria-label="更多"><svg class="i24" viewBox="0 0 24 24"><circle cx="12" cy="12" r="11" fill="#e9e9e0" stroke="#888" /><path d="M7 9l5 5 5-5" fill="none" stroke="#222" stroke-width="3" /></svg></button>
          </footer>
        </section>

        <section class="dialog draft" aria-label="拔模斜度分析">
          <header>拔模斜度分析<button aria-label="关闭拔模斜度分析"><svg class="i14" viewBox="0 0 14 14"><path d="M3 2l8 10M11 2L3 12" stroke="#8f9193" stroke-width="3" /></svg></button></header>
          <form @submit.prevent>
            <div class="field top"><label for="surface">曲面:</label><textarea id="surface" class="surface" readonly>BASHOU.PRT</textarea></div>
            <div class="field"><label for="direction">方向:</label><input id="direction" class="direction" value="曲面:F5(导入特征)" readonly><button class="btn">反向</button></div>
            <hr>
            <div class="field tight"><label for="draft">拔模:</label><input id="draft" v-model="draft"></div>
            <div class="field tight"><label for="sample">样本:</label><span class="pick"><select id="sample" v-model="sample"><option>质量</option></select></span></div>
            <div class="field tight"><label for="quality">质量:</label><input id="quality" v-model="quality" type="range" min="0" max="100"><input v-model="qualityText" class="num" aria-label="质量值"></div>
            <label class="check"><input v-model="update" type="checkbox">更新</label>
            <div class="result"><textarea v-model="result" aria-label="结果" readonly /><button class="blue-info" aria-label="结果信息">i</button></div>
            <div class="save-as"><span class="pick"><select v-model="mode" aria-label="分析类型"><option>快速</option></select></span><input value="ANALYSIS_DRAFT_1" aria-label="分析名称" disabled></div>
            <div class="actions"><button class="btn repeat">重复(R)</button><button class="btn ok">确定</button><button class="btn">取消</button></div>
          </form>
        </section>
      </main>

      <aside class="web">
        <div class="web-title">
          <svg class="i14" viewBox="0 0 14 14"><path d="M4 4V2h8v8h-2M2 4h8v8H2z" fill="none" stroke="#222" /></svg>
          <svg class="i14" viewBox="0 0 14 14"><path d="M2 2l10 10M12 2L2 12" stroke="#222" /></svg>
        </div>
        <div class="web-bar">
          <svg class="i20" viewBox="0 0 20 20"><path d="M3 5h8q6 1 6 6t-6 7H6" fill="none" stroke="#222" stroke-width="1.300" /><path d="M1 5l5-4v8z" fill="#222" /></svg>
          <i class="caret tiny" />
          <svg class="i14" viewBox="0 0 14 14"><path d="M0 1h14M0 7h14M0 13h14" stroke="#222" stroke-width="1.300" /></svg>
        </div>
        <div class="web-marks">»</div>
        <div class="web-body"><div class="scroll"><i class="up" /><span class="thumb" /><i class="down" /></div></div>
        <div class="web-zoom"><svg class="i14" viewBox="0 0 14 14"><circle cx="6" cy="6" r="5" fill="none" stroke="#555" /><path d="M4 6h4M6 4v4M10 10l4 4" stroke="#555" /></svg>125%</div>
      </aside>
    </div>

    <div class="taskbar">
      <button class="launch" aria-label="开始"><svg class="i22" viewBox="0 0 20 20" v-html="icons.start" /></button>
      <button class="launch" aria-label="爱奇艺"><span class="qiyi"><span>iQIY</span></span></button>
      <button v-for="(t, i) in tasks" :key="t.label" class="task" :class="{ current: i === 0 }"><svg class="i28" viewBox="0 0 20 20" v-html="icons[t.icon]" />{{ t.label }}</button>
      <div class="tray">
        <svg v-for="t in tray" :key="t" class="i20" viewBox="0 0 20 20" v-html="icons[t]" />
        <span>简体</span>
        <time><span>19:06 周六</span><span>2021/7/24</span></time>
      </div>
    </div>
    <div class="forum-mark">
      <svg width="60" height="62" viewBox="0 0 60 62"><ellipse cx="22" cy="24" rx="14" ry="22" transform="rotate(-38 22 24)" fill="none" stroke="#6d8496" stroke-width="4" /><path d="M32 32Q50 12 56 30Q56 52 36 62Q28 60 33 50Q36 60 44 52Q54 38 51 29Q46 22 32 32z" fill="#a11a22" /></svg>
      <div><strong>野火论坛</strong><span>www.proewildfire.cn</span></div>
    </div>
  </div>
</template>

<style>
html, body, #app { height: 100%; overflow: hidden; }
</style>

<style scoped>
.desktop { position: relative; height: 100vh; display: flex; flex-direction: column; font: 15px/20px "Open Sans", "Noto Sans CJK SC", sans-serif; color: #3b3d3f; }
.desktop *, .desktop *::before, .desktop *::after { box-sizing: border-box; }
button, input, select, textarea { font: inherit; color: inherit; }
button { border: 0; padding: 0; background: none; white-space: nowrap; }
input, select, textarea { border-radius: 0; outline: 0; min-width: 0; }
svg { flex: none; display: block; }
h1, h2, p, ul, ol { margin: 0; padding: 0; font-weight: 400; list-style: none; }
.i14 { width: 14px; height: 14px; } .i20 { width: 20px; height: 20px; } .i22 { width: 22px; height: 22px; }
.i24 { width: 24px; height: 24px; } .i28 { width: 28px; height: 28px; } .i40 { width: 40px; height: 40px; }
.caret { flex: none; width: 8px; height: 6px; background: #666; clip-path: polygon(0 0, 100% 0, 50% 100%); }
.caret.faded { background: #b5b7b9; }
.rule { width: 1px; background: #b4b6b8; align-self: stretch; }

.windows { flex: 1; min-height: 0; display: flex; }
.creo { position: relative; z-index: 1; flex: 1; min-width: 0; display: flex; flex-direction: column; border: solid #a1a1a1; border-width: 5px 5px 5px 4px; background: #eeeff1; box-shadow: 0 0 12px rgba(0, 0, 0, .4); }
.title-bar { height: 33px; flex: none; display: grid; grid-template-columns: 1fr auto 1fr; align-items: center; padding-bottom: 3px; background: #e2e2e2; }
.title-bar h1 { font-size: 17px; line-height: 24px; color: #222; }
.app-icon { width: 48px; height: 26px; padding: 4px 0 0 14px; border-right: 1px solid #b5b5b5; }
.win-controls { display: flex; justify-content: flex-end; gap: 18px; padding-right: 13px; }
.tabs { height: 33px; flex: none; display: flex; background: #e2e2e2; border-bottom: 1px solid #c3c7ca; }
.tabs > button { padding: 0 24px 3px; font-size: 18px; line-height: 28px; color: #4a4c4e; background: #ccd1d4; border-right: 1px solid #e2e5e7; }
.tabs > .file { padding: 0 31px 3px; background: #666; color: #fff; border: 0; }
.tabs > .active { background: #f8f8f8; color: #111; border-top: 1px solid #999; margin-bottom: -1px; }
.helpers { margin-left: auto; display: flex; align-items: center; gap: 10px; padding: 0 5px 6px 0; }
.help { width: 20px; height: 20px; border-radius: 50%; background: #3c3c3c; color: #fff; font-weight: 700; line-height: 20px; }

.ribbon { height: 135px; flex: none; display: flex; background: #f8f8f8; border-bottom: 2px solid #9fa1a3; }
.group { flex: none; display: flex; flex-direction: column; border-right: 1px solid #bfc1c3; }
.group-body { height: 104px; display: flex; padding-left: 8px; }
.group-title { flex: 1; display: flex; align-items: center; justify-content: center; gap: 5px; background: #edeff1; }
.rest { flex: 1; border: 0; }
.manage { width: 117px; } .custom { width: 265px; } .report { width: 119px; } .measure { width: 61px; }
.query { width: 77px; } .inspect { width: 229px; } .design { width: 283px; }
.col { flex: 1; display: flex; flex-direction: column; }
.custom .col:first-child { flex: none; width: 125px; } .inspect .col:first-child { flex: none; width: 112px; }
.cmd { height: 34px; display: flex; align-items: center; gap: 5px; padding-bottom: 1px; }
.cmd .caret { margin-left: 4px; }
.cmd.off, .big.off { color: #a6a8aa; } .off .caret { background: #a9abad; }
.cmd.on { align-self: flex-start; height: 30px; margin: 2px 0 2px -5px; padding: 0 4px; background: #dfe0e2; border: 1px solid #b0b2b4; }
.measure .group-body, .query .group-body { padding: 0; justify-content: center; }
.big { display: flex; flex-direction: column; align-items: center; padding-top: 7px; white-space: normal; }
.big span { margin-top: 9px; } .big .caret { margin-top: 7px; }
.design .big { width: 60px; } .design .col { margin-left: 9px; } .design .end { width: 66px; margin-right: 7px; }

.quick { height: 30px; flex: none; display: flex; align-items: center; gap: 10px; padding-left: 15px; }
.quick .rule { margin: 0 0 0 -8px; }

.work { flex: 1; min-height: 0; display: flex; }
.panel { width: 350px; flex: none; display: flex; flex-direction: column; border-top: 2px solid #a0a2a4; border-right: 2px solid #b7babc; }
.panel-tabs { height: 35px; flex: none; display: flex; background: #a9abad; gap: 1px; }
.panel-tabs button { width: 93px; display: flex; align-items: center; gap: 7px; padding-left: 9px; background: #d9dbdc; color: #777; border-bottom: 1px solid #aaacae; }
.panel-tabs .active { width: 93px; gap: 7px; padding-left: 11px; background: #eeeff1; color: #333; border: 0; } .panel-tabs .wide { width: 139px; gap: 6px; }
.panel-head { height: 35px; flex: none; display: flex; align-items: center; gap: 10px; padding: 0 10px 0 35px; }
.panel-head h2 { font-size: 15px; line-height: 20px; margin-right: auto; font-weight: 500; }
.panel-head .ghost { opacity: .35; }
.filter { height: 34px; flex: none; display: flex; align-items: center; gap: 4px; padding-left: 14px; }
.filter-box { width: 251px; height: 34px; display: flex; align-items: center; padding-right: 4px; background: #fff; border: 1px solid #b9bbbd; }
.filter-box input { flex: 1; border: 0; background: none; }
.filter .caret { margin-left: 3px; } .dash { width: 10px; height: 3px; margin-left: 10px; background: #888; }
.tree { flex: 1; margin: 5px 6px 6px 10px; background: #fdfdfd; border-top: 1px solid #c6c8ca; }
.tree li { height: 26px; display: flex; align-items: center; gap: 6px; padding-left: 10px; white-space: pre; }
.tree .root { gap: 7px; padding-left: 2px; }
.twist { width: 8px; height: 10px; margin-right: 4px; clip-path: polygon(0 0, 100% 50%, 0 100%); } .twist.shown { background: #888; }

.viewport { position: relative; flex: 1; min-width: 0; background: linear-gradient(#c5dbeb, #5b7baa); display: flex; justify-content: center; align-items: flex-start; }
.model { position: absolute; inset: 0; width: 100%; height: 100%; }
.view-tools { position: relative; width: 460px; height: 37px; margin-top: 7px; padding: 0 2px 1px; display: flex; background: #eeeff1; border: 1px solid #b5b8ba; }
.view-tools button { width: 32px; display: flex; align-items: center; justify-content: center; } .view-tools .on { background: #dcdee0; border: 1px solid #a9abad; margin: 3px 1px 2px; width: 30px; }

.status { height: 42px; flex: none; display: flex; align-items: center; padding: 1px 21px 0 7px; border-top: 2px solid #a0a2a4; }
.status > button { margin-right: 7px; } .status .framed { width: 26px; height: 26px; padding: 2px; background: #dfe0e2; border: 1px solid #b0b2b4; }
.status > .rule { margin: 4px; }
.status > .rule.far { margin-left: auto; margin-right: 44px; }
.status p { display: flex; align-items: center; gap: 2px; font-size: 13px; line-height: 20px; padding-bottom: 6px; }
.find { width: 52px; height: 29px; margin: 0 -2px; display: flex; border: 1px solid #b5b7b9; background: #f7f7f7; align-items: center; justify-content: space-between; padding-left: 5px; }
.find .drop { width: 17px; height: 100%; padding-left: 4px; border-left: 1px solid #b5b7b9; } .find .caret { display: block; }
.status output { width: 115px; }

.pick { position: relative; display: block; height: 28px; }
.pick select { width: 100%; height: 100%; appearance: none; padding: 0 24px 0 8px; border: 1px solid #a9abad; background: #f7f7f7; }
.pick::after { content: ""; position: absolute; right: 6px; top: 11px; width: 8px; height: 6px; background: #555; clip-path: polygon(0 0, 100% 0, 50% 100%); pointer-events: none; }
.pick::before { content: ""; position: absolute; right: 19px; top: 1px; bottom: 1px; width: 1px; background: #a9abad; pointer-events: none; }
.scope { width: 217px; }

.dialog { position: absolute; display: flex; flex-direction: column; background: #eeeff1; border: 2px solid #f7f8f8; box-shadow: 0 2px 10px rgba(0, 0, 0, .55); }
.dialog > header { height: 36px; flex: none; display: flex; align-items: center; justify-content: center; background: #e6e7e8; color: #9a9c9e; }
.dialog > header button { position: absolute; right: 11px; }
.colors { left: 323px; top: 236px; width: 244px; height: 683px; }
.legend { flex: 1; display: flex; padding: 11px 0 12px 32px; background: #fbfbfb; }
.bar { width: 16px; display: flex; flex-direction: column; } .bar span { flex: 1; }
.legend ol { flex: 1; display: flex; flex-direction: column; justify-content: space-around; margin: 58px 0; padding-left: 12px; }
.legend li { height: 24px; display: flex; align-items: center; font-size: 16px; }
.legend li input { width: 100px; height: 24px; margin: 0 5px 0 12px; padding: 0 2px; border: 0; background: #fff; }
.legend b { margin-left: 12px; font-weight: 400; color: #000; }
.colors footer { height: 44px; display: flex; align-items: center; gap: 18px; padding: 0 5px 4px 10px; border-top: 1px solid #c0c2c4; }
.info { width: 17px; height: 25px; border-radius: 4px; background: #12618a; color: #fff; font: 700 20px/24px "Liberation Serif", serif; } .more { margin-left: auto; }

.draft { right: 29px; top: 68px; width: 302px; }
.draft form { padding: 19px 12px 11px; display: flex; flex-direction: column; }
.draft input:not([type]), .draft textarea { height: 28px; flex: 1; padding: 0 4px; border: 1px solid #a9abad; background: #fff; font-size: 15px; }
.field { display: flex; align-items: center; margin-bottom: 5px; min-height: 30px; } .field.top { align-items: flex-start; }
.field label { width: 82px; flex: none; } .field .pick { flex: 1; }
.field.tight { min-height: 28px; margin-bottom: 4px; }
.draft .surface { height: 48px; padding: 2px 7px; background: #f3f0fe; box-shadow: inset 0 0 0 1px #fff; resize: none; overflow: hidden; }
.draft .direction:not([type]) { height: 26px; padding: 0 0 0 6px; margin-right: 6px; background: #ebffde; box-shadow: inset 0 0 0 1px #fff; color: #222; }
.btn { width: 54px; height: 30px; flex: none; background: #f8f8f8; border: 1px solid #a9abad; }
.draft hr { width: 100%; margin: 10px 0 14px; border: 0; border-top: 1px solid #c3c5c7; }
.draft [type=range] { flex: 1; width: 0; margin: 0 9px 0 2px; height: 26px; appearance: none; background: linear-gradient(#999, #999) center / 100% 2px no-repeat; }
.draft [type=range]::-webkit-slider-thumb { appearance: none; width: 11px; height: 25px; background: #eee; border: 1px solid #888; border-radius: 2px; }
.draft .num:not([type]) { flex: none; width: 56px; }
.check { display: flex; align-items: center; gap: 8px; margin: 11px 0 15px 2px; }
.check input { position: relative; appearance: none; width: 15px; height: 15px; margin: 0; border: 1px solid #777; background: #fff; }
.check input:checked::after { content: ""; position: absolute; left: 4px; top: 0; width: 5px; height: 10px; border: solid #333; border-width: 0 2px 2px 0; transform: rotate(40deg); }
.result { display: flex; align-items: flex-end; gap: 6px; margin-bottom: 12px; }
.draft .result textarea { flex: none; width: 244px; height: 88px; padding: 3px; background: #f3f3f3; resize: none; white-space: pre; overflow: hidden; }
.blue-info { width: 18px; height: 20px; margin-bottom: 5px; background: #3f5494; color: #fff; font: 700 17px/20px "Liberation Serif", serif; }
.save-as { display: flex; gap: 6px; } .save-as .pick { width: 82px; }
.draft .save-as input:disabled { color: #a9abad; border-color: #c9cbcd; }
.actions { display: flex; gap: 10px; margin: 20px -12px 0; padding: 12px 12px 0; border-top: 1px solid #c3c5c7; }
.repeat { width: 74px; margin-right: auto; } .btn.ok { background: #a3e1ff; border-color: #6bc5f5; }

.web { width: 92px; flex: none; display: flex; flex-direction: column; background: #fff; color: #555; }
.web-title { height: 36px; background: #e1e5ec; display: flex; align-items: center; gap: 24px; padding-left: 24px; }
.web-bar { height: 39px; display: flex; align-items: center; gap: 6px; padding-left: 15px; border-bottom: 1px solid #e3e3e3; } .web-bar .i14 { margin-left: 12px; }
.caret.tiny { width: 6px; height: 4px; background: #222; }
.web-marks { height: 29px; padding-left: 4px; line-height: 26px; border-bottom: 1px solid #e3e3e3; font-size: 13px; }
.web-body { flex: 1; display: flex; justify-content: flex-end; }
.scroll { width: 21px; padding: 8px 2px; display: flex; flex-direction: column; align-items: center; background: #f0f0f0; }
.scroll i { width: 10px; height: 6px; background: #505050; clip-path: polygon(50% 0, 100% 100%, 0 100%); } .scroll .down { background: #a0a0a0; clip-path: polygon(0 0, 100% 0, 50% 100%); margin-top: 7px; }
.thumb { width: 17px; height: 145px; background: #c1c1c1; margin-top: auto; }
.web-zoom { height: 27px; display: flex; align-items: center; justify-content: flex-end; gap: 2px; padding: 0 19px 2px 0; font-size: 13px; border-top: 1px solid #e3e3e3; }

.taskbar { height: 49px; flex: none; display: flex; align-items: center; background: #02040a; color: #fff; }
.launch { width: 60px; height: 100%; display: flex; align-items: center; justify-content: center; }
.launch + .launch { padding-left: 4px; }
.qiyi { width: 30px; height: 30px; padding: 5px 3px; border-radius: 5px; background: #08c411; }
.qiyi span { display: block; border: solid #fff; border-width: 2px 0; border-radius: 5px; font: 700 11px/16px "Liberation Sans", sans-serif; }
.task { width: 190px; height: 100%; margin-right: 10px; padding-left: 8px; display: flex; align-items: center; gap: 5px; border-bottom: 2px solid #a4dcf5; }
.launch + .task { margin-left: 4px; } .task.current { width: 200px; margin-right: 5px; padding-left: 13px; background: #323337; }
.tray { margin-left: auto; display: flex; align-items: center; gap: 10px; padding-right: 35px; }
.tray time { margin-left: 26px; display: flex; flex-direction: column; text-align: right; }
.forum-mark { position: absolute; z-index: 2; right: 5px; bottom: 5px; width: 206px; height: 62px; display: flex; background: rgba(255, 255, 255, .35); pointer-events: none; overflow: hidden; }
.forum-mark svg { opacity: .75; }
.forum-mark div { display: flex; flex-direction: column; align-items: flex-start; }
.forum-mark strong { margin: 2px 0 0 10px; font-size: 29px; line-height: 36px; font-weight: 900; color: rgba(10, 125, 60, .5); }
.forum-mark span { font-size: 15px; line-height: 20px; color: rgba(40, 90, 100, .6); white-space: nowrap; }
</style>
